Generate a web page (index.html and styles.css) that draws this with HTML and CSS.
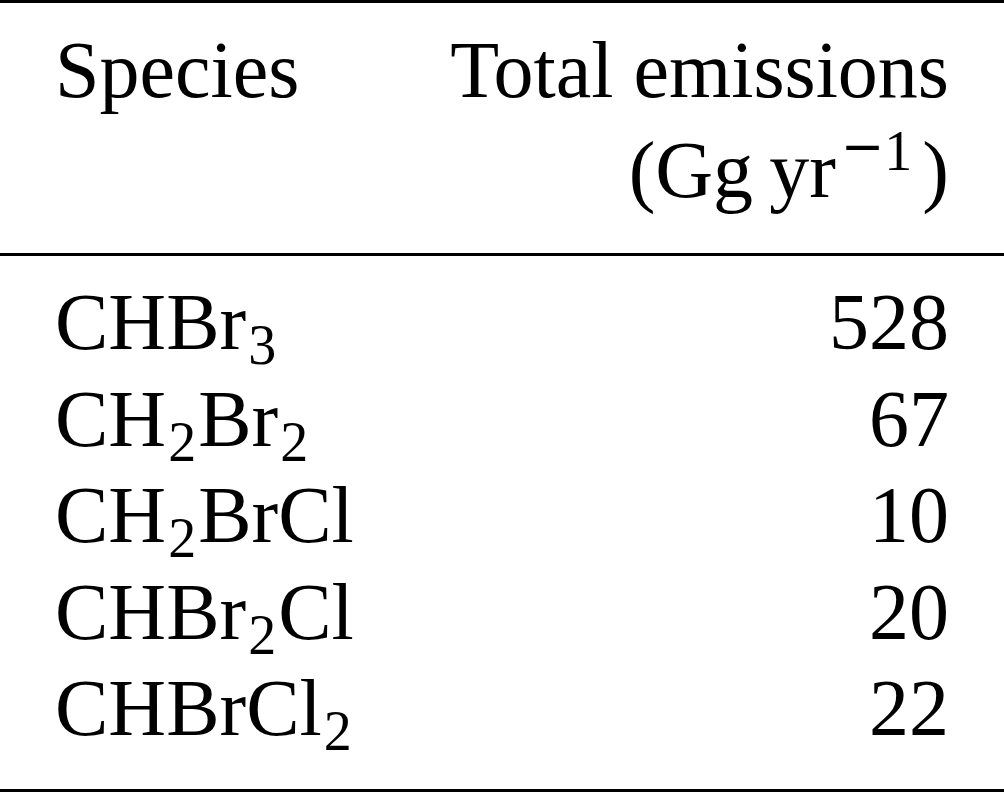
FILE: index.html
```html
<!DOCTYPE html>
<html lang="en">
<head>
    <meta charset="UTF-8">
    <meta name="viewport" content="width=device-width, initial-scale=1.0">
    <title>Total emissions by species</title>
    <link rel="stylesheet" href="styles.css">
</head>
<body>
    <div class="emissions-table">
        <div class="table-head">
            <div class="cell">Species</div>
            <div class="cell num">
                <div>Total emissions</div>
                <div class="unit-line">(Gg&thinsp;yr<sup><span class="minus">&minus;</span>1</sup>)</div>
            </div>
        </div>

        <div class="table-body">
            <div class="cell">CHBr<sub>3</sub></div>
            <div class="cell num">528</div>

            <div class="cell">CH<sub>2</sub>Br<sub>2</sub></div>
            <div class="cell num">67</div>

            <div class="cell">CH<sub>2</sub>BrCl</div>
            <div class="cell num">10</div>

            <div class="cell">CHBr<sub>2</sub>Cl</div>
            <div class="cell num">20</div>

            <div class="cell">CHBrCl<sub>2</sub></div>
            <div class="cell num">22</div>
        </div>
    </div>
</body>
</html>
```

FILE: styles.css
```css
* {
    margin: 0;
    padding: 0;
    box-sizing: border-box;
}

body {
    font-family: 'Liberation Serif', 'Times New Roman', serif;
    font-size: 80px;
    color: #000;
    background: #fff;
}

.emissions-table {
    width: 1004px;
}

.table-head,
.table-body {
    display: grid;
    grid-template-columns: 1fr auto;
    padding-left: 55px;
    padding-right: 55px;
}

.table-head {
    border-top: 3px solid #000;
    border-bottom: 3px solid #000;
    padding-top: 19px;
    padding-bottom: 35px;
    line-height: 96px;
}

.table-body {
    padding-top: 18px;
    padding-bottom: 32px;
    border-bottom: 3px solid #000;
    line-height: 96.5px;
}

.num {
    text-align: right;
}

.unit-line {
    margin-top: 4px;
}

sub,
sup {
    font-size: 56px;
    line-height: 0;
}

sub {
    vertical-align: -15px;
    margin-left: 2px;
    margin-right: 2px;
}

sup {
    vertical-align: 27px;
    margin-left: 5px;
    margin-right: 10px;
}

/* math minus is wider than the text one */
.minus {
    font-family: 'DejaVu Serif', serif;
    font-size: 52px;
    vertical-align: 6px;
}
```
